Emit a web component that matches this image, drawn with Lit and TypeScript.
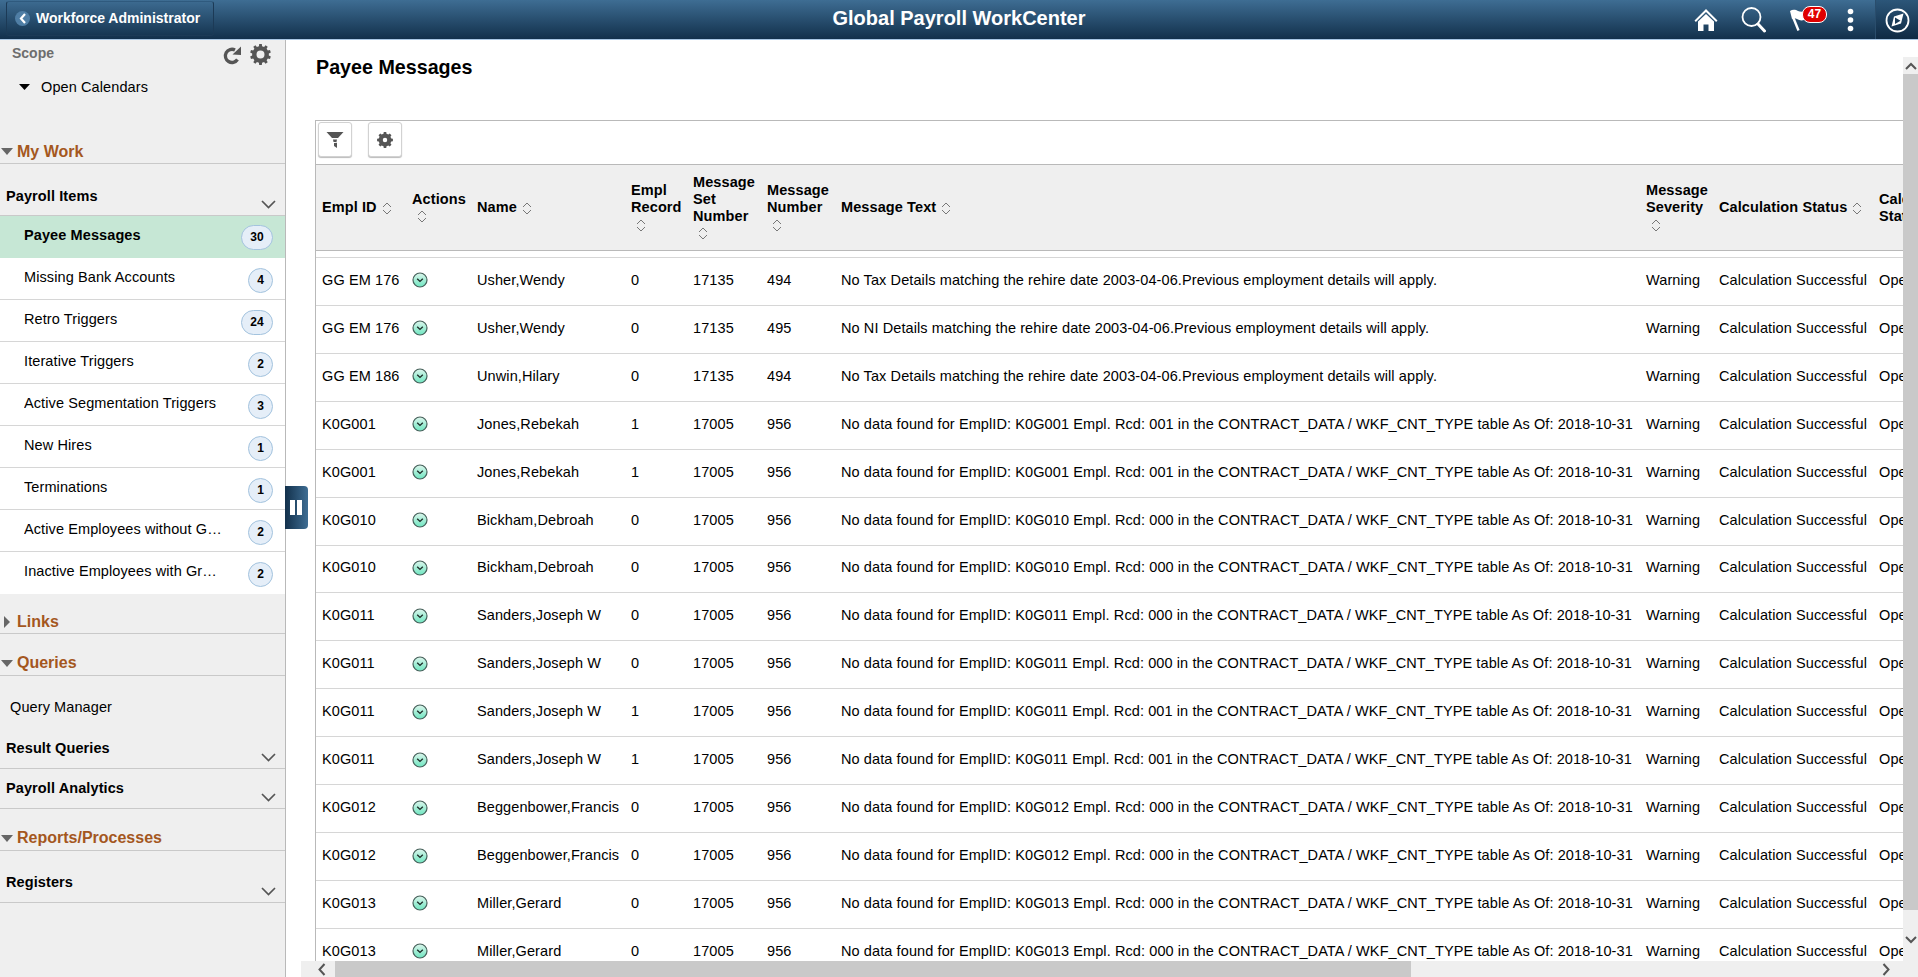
import { LitElement, html, css } from "lit";
import { customElement } from "lit/decorators.js";

function gearPath(cx: number, cy: number, ro: number, ri: number, hole: number, teeth = 8) {
  const pts: string[] = [];
  const step = (Math.PI * 2) / teeth;
  for (let i = 0; i < teeth; i++) {
    const a = i * step - Math.PI / 2;
    const w = step * 0.2;
    const w2 = step * 0.3;
    const p = (r: number, t: number) => `${(cx + r * Math.cos(t)).toFixed(2)} ${(cy + r * Math.sin(t)).toFixed(2)}`;
    pts.push(p(ri, a - w2), p(ro, a - w), p(ro, a + w), p(ri, a + w2));
  }
  return `M${pts.join("L")}Z M${cx - hole} ${cy}a${hole} ${hole} 0 1 0 ${hole * 2} 0a${hole} ${hole} 0 1 0 ${-hole * 2} 0Z`;
}

const gear = (size: number, teeth: number, hole: number) => html`<svg width=${size} height=${size} viewBox="0 0 20 20"><path fill="#555" fill-rule="evenodd" d=${gearPath(10, 10, 10, 8, hole, teeth)}></path></svg>`;
const chevron = html`<svg class="chev" width="15" height="9" viewBox="0 0 15 9"><path d="M1 1l6.5 6.5L14 1" fill="none" stroke="#555" stroke-width="1.7"></path></svg>`;
const sortIcon = html`<span class="sort"><svg width="10" height="13" viewBox="0 0 10 13"><path d="M1 5l4-4 4 4M1 8l4 4 4-4" fill="none" stroke="#777" stroke-width="1"></path></svg></span>`;
const actionIcon = html`<svg class="act" width="16" height="16" viewBox="0 0 16 16"><defs><linearGradient id="ag" x1="0" y1="0" x2="0" y2="1"><stop offset="0" stop-color="#dcf5ec"></stop><stop offset="1" stop-color="#6ee6c0"></stop></linearGradient></defs><circle cx="8" cy="8" r="7" fill="url(#ag)" stroke="#46605a" stroke-width="1.2"></circle><path d="M5.2 6.8L8 9.4l2.8-2.6" fill="none" stroke="#1d2b28" stroke-width="1.4"></path></svg>`;

const cols = ["Empl ID", "Actions", "Name", "Empl Record", "Message Set Number", "Message Number", "Message Text", "Message Severity", "Calculation Status", "Calendar Status"];

const tax = "No Tax Details matching the rehire date 2003-04-06.Previous employment details will apply.";
const ni = "No NI Details matching the rehire date 2003-04-06.Previous employment details will apply.";
const nd = (id: string, rcd: string) => `No data found for EmplID: ${id} Empl. Rcd: ${rcd} in the CONTRACT_DATA / WKF_CNT_TYPE table As Of: 2018-10-31`;

const rows: [string, string, string, string, string, string][] = [
  ["GG EM 176", "Usher,Wendy", "0", "17135", "494", tax],
  ["GG EM 176", "Usher,Wendy", "0", "17135", "495", ni],
  ["GG EM 186", "Unwin,Hilary", "0", "17135", "494", tax],
  ["K0G001", "Jones,Rebekah", "1", "17005", "956", nd("K0G001", "001")],
  ["K0G001", "Jones,Rebekah", "1", "17005", "956", nd("K0G001", "001")],
  ["K0G010", "Bickham,Debroah", "0", "17005", "956", nd("K0G010", "000")],
  ["K0G010", "Bickham,Debroah", "0", "17005", "956", nd("K0G010", "000")],
  ["K0G011", "Sanders,Joseph W", "0", "17005", "956", nd("K0G011", "000")],
  ["K0G011", "Sanders,Joseph W", "0", "17005", "956", nd("K0G011", "000")],
  ["K0G011", "Sanders,Joseph W", "1", "17005", "956", nd("K0G011", "001")],
  ["K0G011", "Sanders,Joseph W", "1", "17005", "956", nd("K0G011", "001")],
  ["K0G012", "Beggenbower,Francis", "0", "17005", "956", nd("K0G012", "000")],
  ["K0G012", "Beggenbower,Francis", "0", "17005", "956", nd("K0G012", "000")],
  ["K0G013", "Miller,Gerard", "0", "17005", "956", nd("K0G013", "000")],
  ["K0G013", "Miller,Gerard", "0", "17005", "956", nd("K0G013", "000")],
];

const items: [string, string][] = [
  ["Payee Messages", "30"],
  ["Missing Bank Accounts", "4"],
  ["Retro Triggers", "24"],
  ["Iterative Triggers", "2"],
  ["Active Segmentation Triggers", "3"],
  ["New Hires", "1"],
  ["Terminations", "1"],
  ["Active Employees without Gross", "2"],
  ["Inactive Employees with Gross Pay", "2"],
];

@customElement("app-root")
export class AppRoot extends LitElement {
  static styles = css`
    :host { display: block; height: 100vh; overflow: hidden; font-family: "Liberation Sans", Arial, sans-serif; font-size: 14px; color: #000; background: #fff; }
    * { box-sizing: border-box; }
    svg { display: block; }

    .top { height: 40px; display: grid; grid-template-columns: 1fr auto 1fr; align-items: stretch; background: linear-gradient(#3e6d93, #12304b); border-bottom: 1px solid #a9c7e4; color: #fff; }
    .back-wrap { padding: 1px 0 0 6px; }
    .back { width: 208px; height: 35px; display: flex; align-items: center; gap: 6px; padding: 0 0 1px 8px; border: 1px solid #1c3a56; border-top-color: #2f5a7e; border-radius: 3px; font-weight: bold; }
    .back-c { width: 15px; height: 15px; border-radius: 50%; background: #4f7ea5; display: flex; align-items: center; justify-content: center; }
    .title { font-size: 20px; font-weight: bold; line-height: 36px; }
    .tools { display: flex; justify-content: flex-end; align-items: stretch; }
    .tool-row { display: flex; align-items: flex-start; }
    .home { margin-top: 8px; }
    .search { margin: 6px 0 0 23px; }
    .flag-w { position: relative; margin: 9px 0 0 24px; width: 36px; height: 24px; }
    .bubble { position: absolute; left: 12px; top: -3px; width: 25px; height: 17px; border-radius: 8px; background: #e00000; border: 1px solid #fff; font-size: 12px; font-weight: bold; line-height: 15px; text-align: center; }
    .dots { margin: 8px 0 0 21px; }
    .nav { width: 43px; margin-left: 21px; border-left: 1px solid #2a4d6c; background: linear-gradient(#2c5679, #0f2a43); padding: 8px 0 0 9px; }

    .body { position: relative; height: calc(100vh - 40px); display: flex; }

    .side { width: 286px; flex: none; height: 100%; background: #efefef; border-right: 1px solid #b9b9b9; }
    .scope { height: 26px; display: flex; align-items: center; padding-left: 12px; font-weight: bold; color: #6d6d6d; }
    .scope-ic { margin-left: auto; display: flex; align-items: center; gap: 8px; padding: 3px 14px 0 0; }
    .open { height: 26px; margin-top: 8px; display: flex; align-items: center; padding-left: 19px; gap: 11px; }
    .open, .grp, .qm, .item, .head, .row { font-size: 14.5px; letter-spacing: 0.1px; }
    .sec { height: 25px; display: flex; align-items: center; padding-top: 1px; border-bottom: 1px solid #c9c9c9; font-size: 16px; font-weight: bold; color: #a4571e; }
    .sec .tri { width: 17px; flex: none; padding-left: 1px; }
    .sec .tri.r { padding-left: 4px; }
    .sec.mywork { margin-top: 39px; }
    .sec.gap { margin-top: 15px; }
    .sec.gap2 { margin-top: 17px; padding-top: 0; }
    .grp { display: flex; justify-content: space-between; align-items: flex-end; padding: 0 9px 0 6px; border-bottom: 1px solid #c9c9c9; font-weight: bold; }
    .grp span { line-height: 18px; margin-bottom: 11px; }
    .grp .chev { margin-bottom: 6px; }
    .first { padding-top: 23px; }
    .first span { margin-bottom: 10px; }
    .p22 { padding-top: 22px; }
    .p11 { padding-top: 11px; }
    .p10 { padding-top: 10px; }
    .qm { height: 42px; margin-top: 10px; padding-left: 10px; line-height: 42px; }
    .item { height: 42px; display: flex; justify-content: space-between; align-items: flex-start; background: #fff; border-bottom: 1px solid #d6d6d6; padding: 0 12px 0 24px; }
    .item:last-child { border-bottom: 0; }
    .item.sel { background: #c6e7d5; font-weight: bold; border-bottom: 0; }
    .item .t { width: 198px; margin-top: 10px; line-height: 18px; white-space: nowrap; overflow: hidden; text-overflow: ellipsis; }
    .badge { margin-top: 10px; min-width: 25px; height: 25px; padding: 0 6px; border-radius: 13px; border: 1px solid #a3c3de; background: #e5eef8; font-size: 12px; letter-spacing: 0; font-weight: bold; line-height: 23px; text-align: center; }
    .item.sel .badge { margin-top: 9px; }
    .badge.two { width: 32px; padding: 0; }

    .pause { position: absolute; left: 285px; top: 446px; width: 23px; height: 43px; background: linear-gradient(90deg, #12304b, #3e6d93); border-radius: 0 4px 4px 0; display: flex; justify-content: center; align-items: center; gap: 2px; padding-right: 1px; }
    .pause i { display: block; width: 5px; height: 15px; background: #fff; }

    .main { flex: 1; min-width: 0; display: grid; grid-template-columns: minmax(0, 1fr) 15px; grid-template-rows: minmax(0, 1fr) 16px; }
    .content { overflow: hidden; padding: 16px 0 0 29px; }
    h1 { margin: 0 0 41px 1px; font-size: 19.7px; line-height: 23px; font-weight: bold; }
    .tbl { border-top: 1px solid #b9b9b9; border-left: 1px solid #b9b9b9; height: 1000px; width: 1700px; }
    .toolbar { height: 43px; display: flex; gap: 16px; padding: 1px 0 0 2px; }
    .tbtn { width: 34px; height: 35px; border: 1px solid #d2d2d2; border-radius: 3px; box-shadow: 0 1px 1px #bbb; display: flex; align-items: center; justify-content: center; background: #fff; }
    .grid { display: grid; grid-template-columns: 90px 65px 154px 62px 74px 74px 805px 73px 160px 80px; }
    .head { height: 87px; background: #efefef; border-top: 1px solid #b9b9b9; border-bottom: 1px solid #b9b9b9; font-weight: bold; line-height: 17px; margin-bottom: 6px; }
    .head > div { padding-left: 6px; align-self: center; }
    .sort { display: inline-block; width: 20px; height: 15px; vertical-align: middle; padding: 1px 0 0 5px; }
    .row { height: 47.93px; align-items: center; border-top: 1px solid #d6d6d6; padding-bottom: 3px; }
    .row > div { padding-left: 6px; white-space: nowrap; overflow: hidden; }
    .act { margin-top: 1px; }

    .vbar { grid-column: 2; grid-row: 1 / 3; display: flex; flex-direction: column; padding-top: 17px; background: #fff; }
    .vtrack { flex: 1; background: #efefef; display: flex; flex-direction: column; align-items: center; }
    .varrow { height: 17px; display: flex; align-items: center; justify-content: center; }
    .varrow.down { height: 60px; }
    .vthumb { width: 100%; height: 836px; background: #c9c9c9; flex: none; }
    .hbar { grid-column: 1; grid-row: 2; margin-left: 15px; background: #efefef; display: flex; align-items: center; }
    .hthumb { height: 100%; width: 1079px; background: #c9c9c9; }
    .harrow { width: 34px; display: flex; justify-content: center; padding-left: 8px; }
    .harrow.r { margin-left: 458px; padding-left: 0; }
  `;

  render() {
    return html`
      <div class="top">
        <div class="back-wrap">
          <div class="back">
            <span class="back-c"><svg width="8" height="11" viewBox="0 0 8 11"><path d="M6 1L2 5.5 6 10" fill="none" stroke="#fff" stroke-width="2.2"></path></svg></span>
            Workforce Administrator
          </div>
        </div>
        <div class="title">Global Payroll WorkCenter</div>
        <div class="tools">
          <div class="tool-row">
            <svg class="home" width="24" height="24" viewBox="0 0 24 24"><path d="M12 1L0.5 12.5l1.4 1.4L12 4l10.1 9.9 1.4-1.4z" fill="#fff"></path><path d="M12 6L4 13.6V23h5.5v-6.5h5V23H20v-9.4z" fill="#fff"></path></svg>
            <svg class="search" width="25" height="27" viewBox="0 0 25 27"><circle cx="10.5" cy="11" r="9" fill="none" stroke="#fff" stroke-width="1.8"></circle><path d="M17 18l6.5 7" stroke="#fff" stroke-width="3" stroke-linecap="round"></path></svg>
            <div class="flag-w">
              <svg width="18" height="22" viewBox="0 0 18 22"><path d="M0 2c3-2 6-1 8 0s5 1 8 0l-2 9c-3 1-5 0-7-1s-3-1-5 0z" fill="#fff"></path><path d="M3 8l5.5 13.5" stroke="#fff" stroke-width="2.4"></path></svg>
              <div class="bubble">47</div>
            </div>
            <svg class="dots" width="7" height="24" viewBox="0 0 7 24"><circle cx="3.5" cy="3.5" r="2.8" fill="#fff"></circle><circle cx="3.5" cy="12" r="2.8" fill="#fff"></circle><circle cx="3.5" cy="20.5" r="2.8" fill="#fff"></circle></svg>
          </div>
          <div class="nav">
            <svg width="25" height="25" viewBox="0 0 25 25"><circle cx="12.5" cy="12.5" r="11" fill="none" stroke="#fff" stroke-width="1.8"></circle><path d="M6.5 18.5L9 8.5l9.5-3L16 15.5z" fill="#fff"></path><path d="M10 9.5v6.5l5.5-3.2z" fill="#1a3a57"></path></svg>
          </div>
        </div>
      </div>
      <div class="body">
        <div class="side">
          <div class="scope">Scope
            <span class="scope-ic">
              <svg width="20" height="20" viewBox="0 0 20 20"><path d="M15.5 14.5A6.6 6.6 0 1 1 13 5" fill="none" stroke="#555" stroke-width="3.3"></path><path d="M19 1.5V10l-8.5-.5z" fill="#555"></path></svg>
              ${gear(21, 10, 3.8)}
            </span>
          </div>
          <div class="open"><svg width="11" height="6" viewBox="0 0 11 6"><path d="M0 0h11L5.5 6z" fill="#000"></path></svg>Open Calendars</div>
          <div class="sec mywork"><span class="tri"><svg width="12" height="7" viewBox="0 0 12 7"><path d="M0 0h12L6 7z" fill="#666"></path></svg></span>My Work</div>
          <div class="grp first"><span>Payroll Items</span>${chevron}</div>
          <div>
            ${items.map(([t, n], i) => html`<div class="item ${i === 0 ? "sel" : ""}"><div class="t">${t}</div><div class="badge ${n.length > 1 ? "two" : ""}">${n}</div></div>`)}
          </div>
          <div class="sec gap"><span class="tri r"><svg width="6" height="12" viewBox="0 0 6 12"><path d="M0 0l6 6-6 6z" fill="#666"></path></svg></span>Links</div>
          <div class="sec gap2"><span class="tri"><svg width="12" height="7" viewBox="0 0 12 7"><path d="M0 0h12L6 7z" fill="#666"></path></svg></span>Queries</div>
          <div class="qm">Query Manager</div>
          <div class="grp p11"><span>Result Queries</span>${chevron}</div>
          <div class="grp p10"><span>Payroll Analytics</span>${chevron}</div>
          <div class="sec gap2"><span class="tri"><svg width="12" height="7" viewBox="0 0 12 7"><path d="M0 0h12L6 7z" fill="#666"></path></svg></span>Reports/Processes</div>
          <div class="grp p22"><span>Registers</span>${chevron}</div>
        </div>
        <div class="pause"><i></i><i></i></div>
        <div class="main">
          <div class="content">
            <h1>Payee Messages</h1>
            <div class="tbl">
              <div class="toolbar">
                <div class="tbtn"><svg width="18" height="16" viewBox="0 0 17 16"><path d="M0 0h17l-5.5 6H5.5z" fill="#555"></path><path d="M6.5 7.5h4l-.5 2.5H7z" fill="#555"></path><path d="M7.5 11l3-.3V16L7.5 14z" fill="#555"></path></svg></div>
                <div class="tbtn">${gear(16, 8, 2.8)}</div>
              </div>
              <div class="grid head">
                ${cols.map((c) => html`<div>${c}${sortIcon}</div>`)}
              </div>
              ${rows.map(
                (r) => html`<div class="grid row">
                  <div>${r[0]}</div><div>${actionIcon}</div><div>${r[1]}</div><div>${r[2]}</div><div>${r[3]}</div><div>${r[4]}</div><div>${r[5]}</div><div>Warning</div><div>Calculation Successful</div><div>Open</div>
                </div>`
              )}
            </div>
          </div>
          <div class="hbar">
            <div class="harrow"><svg width="8" height="13" viewBox="0 0 8 13"><path d="M6.5 1L1.5 6.5l5 5.5" fill="none" stroke="#555" stroke-width="2"></path></svg></div>
            <div class="hthumb"></div>
            <div class="harrow r"><svg width="8" height="13" viewBox="0 0 8 13"><path d="M1.5 1l5 5.5-5 5.5" fill="none" stroke="#555" stroke-width="2"></path></svg></div>
          </div>
          <div class="vbar">
            <div class="vtrack">
              <div class="varrow"><svg width="12" height="8" viewBox="0 0 12 8"><path d="M1 7l5-5 5 5" fill="none" stroke="#555" stroke-width="2"></path></svg></div>
              <div class="vthumb"></div>
              <div class="varrow down"><svg width="12" height="8" viewBox="0 0 12 8"><path d="M1 1l5 5 5-5" fill="none" stroke="#555" stroke-width="2"></path></svg></div>
            </div>
          </div>
        </div>
      </div>
    `;
  }
}
